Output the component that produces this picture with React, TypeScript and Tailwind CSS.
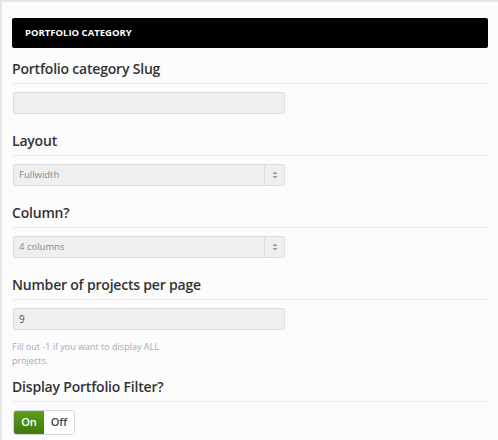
const font = { fontFamily: '"Open Sans", "Noto Sans", sans-serif' }

function Heading({ children }: { children: string }) {
  return (
    <div className="border-b border-[#ececec] pb-[4px]">
      <h3 className="text-[14px] font-semibold leading-[20px] tracking-[-0.2px] text-[#333]">{children}</h3>
    </div>
  )
}

function TextInput({ value = '' }: { value?: string }) {
  return (
    <div className="ml-[1px] mt-[8px] flex h-[22px] w-[272px] items-center rounded-[2px] border border-[#dcdcdc] bg-[#efefef] px-[5px] text-[10px] text-[#555]">
      {value}
    </div>
  )
}

function SelectBox({ value }: { value: string }) {
  return (
    <div className="ml-[1px] mt-[8px] flex h-[22px] w-[272px] items-center rounded-[2px] border border-[#dcdcdc] bg-[#efefef] text-[9.5px] text-[#888]">
      <span className="flex-1 px-[5px]">{value}</span>
      <span className="flex h-full w-[20px] items-center justify-center border-l border-[#dcdcdc]">
        <svg width="6" height="8" viewBox="0 0 6 8">
          <path d="M3 0.5 L5.5 3 H0.5 Z" fill="#999" />
          <path d="M3 7.5 L5.5 5 H0.5 Z" fill="#999" />
        </svg>
      </span>
    </div>
  )
}

export default function App() {
  return (
    <div style={font} className="h-[440px] w-[498px] border-l-2 border-t-2 border-[#e6e6e6] bg-[#fcfcfc]">
      <div className="pl-[10px] pr-[10px] pt-[16px]">
        <div className="flex h-[30px] items-center rounded-[2px] bg-black pl-[13px] text-[9.5px] font-bold uppercase text-white">
          Portfolio Category
        </div>

        <div className="mt-[11px]">
          <Heading>Portfolio category Slug</Heading>
          <TextInput />
        </div>

        <div className="mt-[17px]">
          <Heading>Layout</Heading>
          <SelectBox value="Fullwidth" />
        </div>

        <div className="mt-[17px]">
          <Heading>Column?</Heading>
          <SelectBox value="4 columns" />
        </div>

        <div className="mt-[17px]">
          <Heading>Number of projects per page</Heading>
          <TextInput value="9" />
          <p className="mt-[10px] w-[160px] text-[9px] leading-[14px] text-[#aaa]">
            Fill out -1 if you want to display ALL projects.
          </p>
        </div>

        <div className="mt-[9px]">
          <Heading>Display Portfolio Filter?</Heading>
          <div className="ml-[1px] mt-[8px] flex h-[25px] w-[62px] overflow-hidden rounded-[3px] border border-[#d6d6d6] text-[11px] font-semibold">
            <span className="flex w-[30px] items-center justify-center bg-gradient-to-b from-[#5e9e1a] to-[#3f7a0c] text-white">
              On
            </span>
            <span className="flex flex-1 items-center justify-center bg-white text-[#444]">Off</span>
          </div>
        </div>
      </div>
    </div>
  )
}
